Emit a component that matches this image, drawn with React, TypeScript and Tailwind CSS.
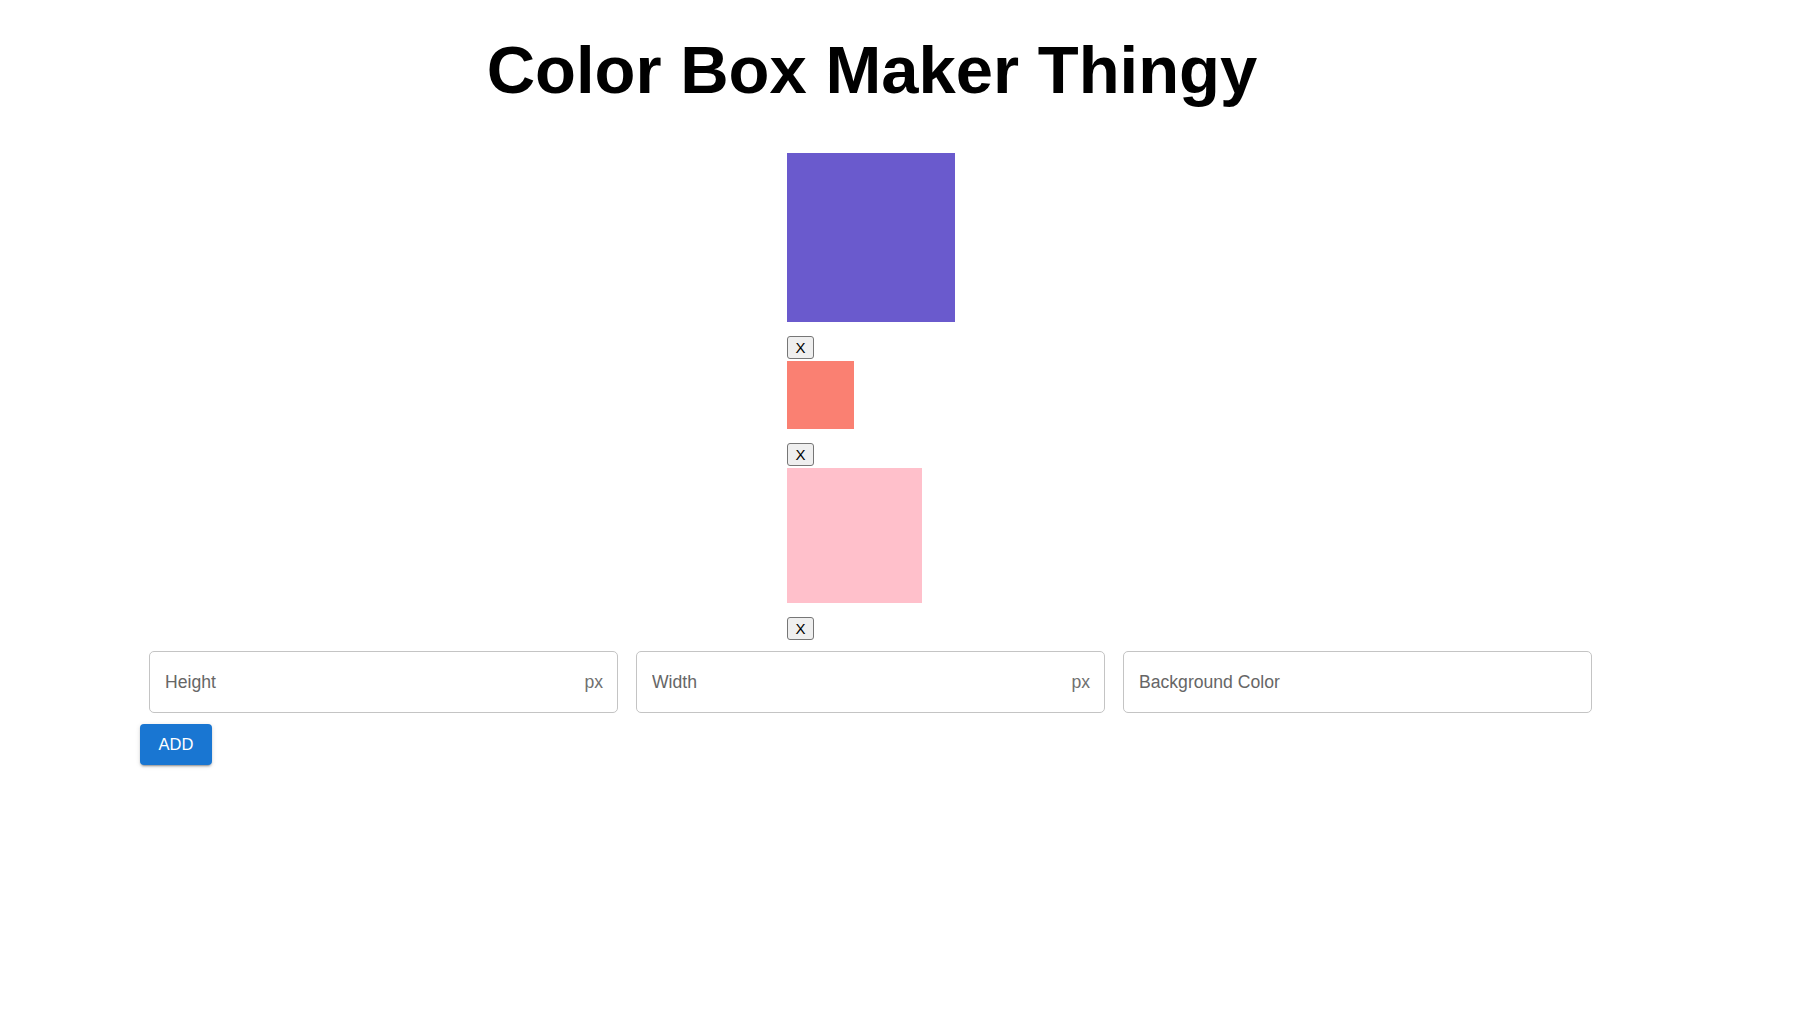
import React from "react";

const boxes = [
  { w: 168, h: 169, color: "#6a5acd" },
  { w: 67, h: 68, color: "#fa8072" },
  { w: 135, h: 135, color: "#ffc0cb" },
];

function Field({ label, adorn }: { label: string; adorn?: string }) {
  return (
    <div className="mx-[9px] flex h-[62px] w-[469px] items-center rounded-[5px] border border-[#c4c4c4] pl-[15px] pr-[14px]">
      <input
        className="min-w-0 flex-1 bg-transparent text-[17.6px] text-[#222] outline-none placeholder:text-[#666]"
        style={{ fontFamily: '"Liberation Sans", Arial, sans-serif' }}
        placeholder={label}
      />
      {adorn && (
        <span className="text-[17.6px] text-[#707070]" style={{ fontFamily: '"Liberation Sans", Arial, sans-serif' }}>
          {adorn}
        </span>
      )}
    </div>
  );
}

export default function App() {
  return (
    <div className="min-h-[1027px] w-full bg-white" style={{ fontFamily: '"Liberation Sans", Arial, sans-serif' }}>
      <div className="ml-[140px] w-[1464px]">
        <h1 className="pt-[32px] text-center text-[67px] font-bold leading-[76px] text-black">Color Box Maker Thingy</h1>
        <div className="ml-[647px] mt-[45px] flex w-[168px] flex-col items-start">
          {boxes.map((b, i) => (
            <div key={i} className="flex flex-col items-start">
              <div style={{ width: b.w, height: b.h, backgroundColor: b.color }} />
              <button className="mt-[14px] mb-[2px] flex h-[23px] w-[27px] items-center justify-center rounded-[3px] border border-[#767676] bg-[#efefef] text-[15px] leading-none text-black">
                X
              </button>
            </div>
          ))}
        </div>
        <div className="mt-[9px] flex">
          <Field label="Height" adorn="px" />
          <Field label="Width" adorn="px" />
          <Field label="Background Color" />
        </div>
        <button className="mt-[11px] flex h-[41px] w-[72px] items-center justify-center rounded-[4px] bg-[#1976d2] text-[16.5px] text-white shadow-[0_3px_1px_-2px_rgba(0,0,0,0.2),0_2px_2px_0_rgba(0,0,0,0.14),0_1px_5px_0_rgba(0,0,0,0.12)]">
          ADD
        </button>
      </div>
    </div>
  );
}
